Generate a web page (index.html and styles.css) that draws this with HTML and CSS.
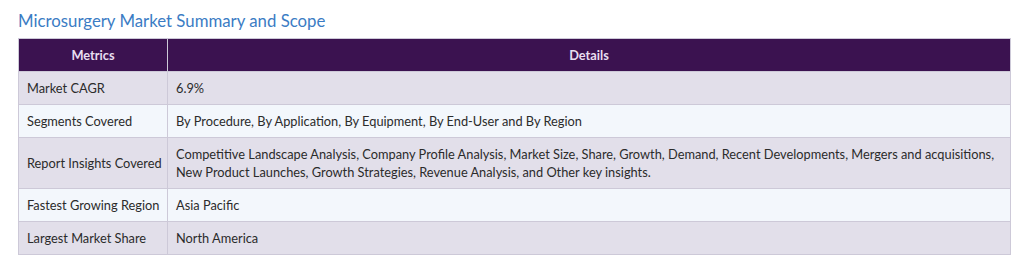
FILE: index.html
```html
<!DOCTYPE html>
<html lang="en">
<head>
<meta charset="utf-8">
<title>Microsurgery Market Summary and Scope</title>
<link rel="stylesheet" href="styles.css">
</head>
<body>
<main class="page">
  <h2 class="title">Microsurgery Market Summary and Scope</h2>
  <table class="summary">
    <thead>
      <tr><th class="col-metric">Metrics</th><th>Details</th></tr>
    </thead>
    <tbody>
      <tr class="odd"><td class="metric">Market CAGR</td><td>6.9%</td></tr>
      <tr class="even"><td class="metric">Segments Covered</td><td>By Procedure, By Application, By Equipment, By End-User and By Region</td></tr>
      <tr class="odd"><td class="metric">Report Insights Covered</td><td>Competitive Landscape Analysis, Company Profile Analysis, Market Size, Share, Growth, Demand, Recent Developments, Mergers and acquisitions, New Product Launches, Growth Strategies, Revenue Analysis, and Other key insights.</td></tr>
      <tr class="even"><td class="metric">Fastest Growing Region</td><td>Asia Pacific</td></tr>
      <tr class="odd"><td class="metric">Largest Market Share</td><td>North America</td></tr>
    </tbody>
  </table>
</main>
</body>
</html>
```
FILE: styles.css
```css
html, body {
  margin: 0;
  padding: 0;
  background: #ffffff;
}
.page {
  padding: 10px 13px 0 18px;
  font-family: Lato, "Open Sans", sans-serif;
}
.title {
  margin: 0 0 7px 0;
  font-size: 16.8px;
  font-weight: 400;
  line-height: 21px;
  color: #3b7cc4;
}
.summary {
  width: 993px;
  table-layout: fixed;
  border-collapse: collapse;
  border: 1px solid #cdc9d8;
  font-size: 12.8px;
  color: #2b2b2b;
}
.summary th {
  background: #3b1250;
  color: #e8def0;
  font-weight: 700;
  font-size: 12.8px;
  height: 32px;
  padding: 0 8px;
  text-align: center;
  border: 1px solid #cdc9d8;
  border-top: 0;
}
.summary th.col-metric {
  width: 132px;
}
.summary td {
  padding: 7px 8px;
  line-height: 18px;
  border: 1px solid #cdc9d8;
  text-align: left;
  vertical-align: middle;
}
.summary td.metric {
  white-space: nowrap;
}
.summary tr.odd td {
  background: #e2dfea;
}
.summary tr.even td {
  background: #f3f7fc;
}
```
